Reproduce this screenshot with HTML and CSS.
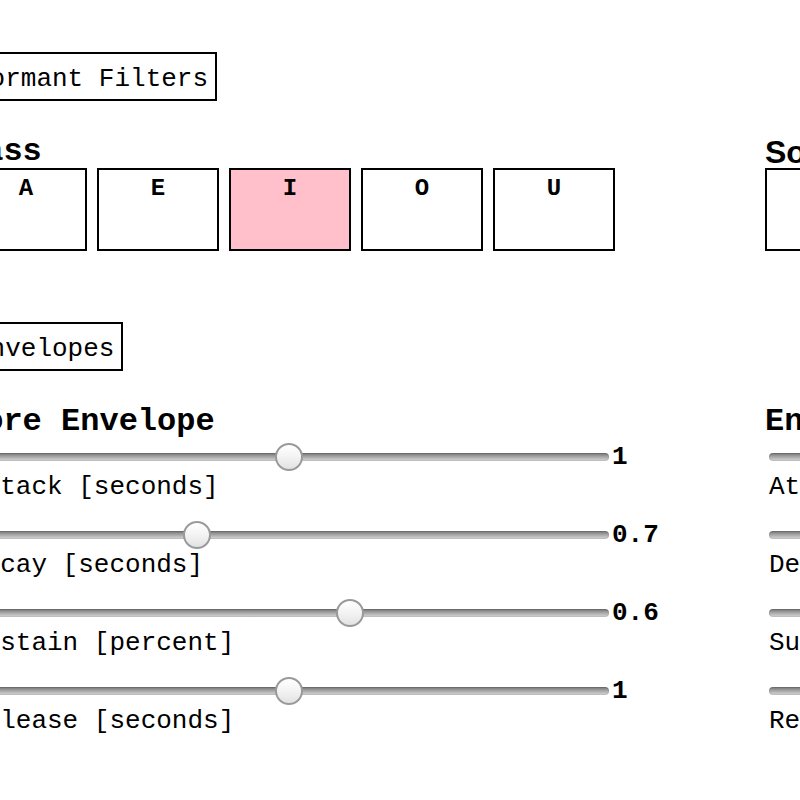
FILE: index.html
```html
<!DOCTYPE html>
<html>
<head>
<meta charset="utf-8">
<link rel="stylesheet" href="styles.css">
</head>
<body>
<div class="page">
  <section class="section section-filters">
    <button class="tab">Formant Filters</button>
    <div class="cols">
      <div class="col">
        <h2 class="col-title">Bass</h2>
        <div class="vowels">
          <div class="vowel">A</div>
          <div class="vowel">E</div>
          <div class="vowel is-active">I</div>
          <div class="vowel">O</div>
          <div class="vowel">U</div>
        </div>
      </div>
      <div class="col">
        <h2 class="col-title col-title-sans">Soprano</h2>
        <div class="vowels">
          <div class="vowel">A</div>
          <div class="vowel">E</div>
          <div class="vowel">I</div>
          <div class="vowel">O</div>
          <div class="vowel">U</div>
        </div>
      </div>
    </div>
  </section>

  <section class="section section-env">
    <button class="tab">Envelopes</button>
    <div class="cols">
      <div class="col">
        <h2 class="env-title">Core Envelope</h2>
        <div class="param">
          <div class="slider-line"><input type="range" class="slider" min="0" max="2" step="0.1" value="1"><span class="val">1</span></div>
          <div class="label">Attack [seconds]</div>
        </div>
        <div class="param">
          <div class="slider-line"><input type="range" class="slider" min="0" max="2" step="0.1" value="0.7"><span class="val">0.7</span></div>
          <div class="label">Decay [seconds]</div>
        </div>
        <div class="param">
          <div class="slider-line"><input type="range" class="slider" min="0" max="1" step="0.01" value="0.6"><span class="val">0.6</span></div>
          <div class="label">Sustain [percent]</div>
        </div>
        <div class="param">
          <div class="slider-line"><input type="range" class="slider" min="0" max="2" step="0.1" value="1"><span class="val">1</span></div>
          <div class="label">Release [seconds]</div>
        </div>
      </div>
      <div class="col">
        <h2 class="env-title">Envelope 2</h2>
        <div class="param">
          <div class="slider-line"><input type="range" class="slider" min="0" max="2" step="0.1" value="1"><span class="val">1</span></div>
          <div class="label">Attack [seconds]</div>
        </div>
        <div class="param">
          <div class="slider-line"><input type="range" class="slider" min="0" max="2" step="0.1" value="0.7"><span class="val">0.7</span></div>
          <div class="label">Decay [seconds]</div>
        </div>
        <div class="param">
          <div class="slider-line"><input type="range" class="slider" min="0" max="1" step="0.01" value="0.6"><span class="val">0.6</span></div>
          <div class="label">Sustain [percent]</div>
        </div>
        <div class="param">
          <div class="slider-line"><input type="range" class="slider" min="0" max="2" step="0.1" value="1"><span class="val">1</span></div>
          <div class="label">Release [seconds]</div>
        </div>
      </div>
    </div>
  </section>
</div>
</body>
</html>
```

FILE: styles.css
```css
html, body {
  margin: 0;
  padding: 0;
  overflow: hidden;
  background: #ffffff;
}

body {
  font-family: "Liberation Mono", "Courier New", monospace;
  color: #000;
}

.page {
  margin-left: -35px;
  width: 1600px;
  padding-top: 52px;
}

.section-env {
  margin-top: 71px;
}

.tab {
  display: block;
  font-family: "Liberation Mono", "Courier New", monospace;
  font-size: 26px;
  line-height: 29px;
  padding: 11px 7px 5px 7px;
  border: 2px solid #000;
  background: #fff;
  color: #000;
  margin: 0;
  border-radius: 0;
}

.cols {
  display: grid;
  grid-template-columns: 800px 800px;
}

.col-title {
  font-size: 32px;
  line-height: 32px;
  font-weight: bold;
  margin: 35px 0 0 0;
}

.col-title-sans {
  font-family: "Liberation Sans", Arial, sans-serif;
}

.env-title {
  font-size: 32px;
  line-height: 40px;
  font-weight: bold;
  margin: 31px 0 0 0;
}

.vowels {
  display: flex;
  gap: 10px;
}

.vowel {
  box-sizing: border-box;
  width: 122px;
  height: 83px;
  padding-top: 3px;
  border: 2px solid #000;
  text-align: center;
  font-size: 24px;
  font-weight: bold;
  line-height: 32px;
  background: #fff;
}

.vowel.is-active {
  background: #ffc0cb;
}

.param {
  margin-left: 4px;
  margin-bottom: 18px;
}

.slider-line {
  display: flex;
  align-items: center;
  height: 30px;
}

.val {
  font-size: 26px;
  font-weight: bold;
  line-height: 30px;
  margin-left: 3px;
}

.label {
  font-size: 26px;
  line-height: 30px;
}

.slider {
  -webkit-appearance: none;
  appearance: none;
  width: 640px;
  height: 30px;
  margin: 0;
  padding: 0;
  background: transparent;
}

.slider::-webkit-slider-runnable-track {
  height: 8px;
  border-radius: 4px;
  background: linear-gradient(#6e6e6e 0%, #9a9a9a 35%, #bdbdbd 70%, #d4d4d4 100%);
  box-shadow: inset 0 0 0 1px rgba(0,0,0,0.08);
}

.slider::-webkit-slider-thumb {
  -webkit-appearance: none;
  width: 28px;
  height: 28px;
  margin-top: -10px;
  border-radius: 50%;
  border: 2px solid #9a9a9a;
  box-sizing: border-box;
  background: linear-gradient(#ffffff 0%, #f3f3f3 50%, #e2e2e2 100%);
}
```
